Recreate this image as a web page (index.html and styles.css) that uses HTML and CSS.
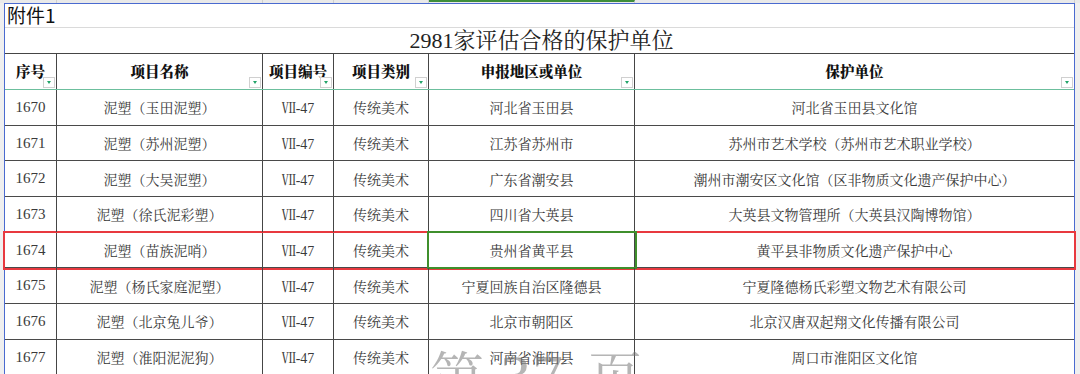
FILE: index.html
```html
<!DOCTYPE html>
<html lang="zh-CN">
<head>
<meta charset="utf-8">
<title>2981家评估合格的保护单位</title>
<link rel="stylesheet" href="styles.css">
</head>
<body>
<div class="page">
  <div class="top-strip">
    <span class="ts c1"></span><span class="ts c2"></span><span class="ts c3"></span><span class="ts c4"></span><span class="ts c5 active"></span><span class="ts c6"></span>
  </div>
  <div class="sheet">
    <div class="note">附件1</div>
    <div class="title">2981家评估合格的保护单位</div>
    <div class="row header">
      <div class="cell">序号<span class="filter"></span></div>
      <div class="cell">项目名称<span class="filter"></span></div>
      <div class="cell">项目编号<span class="filter"></span></div>
      <div class="cell">项目类别<span class="filter"></span></div>
      <div class="cell">申报地区或单位<span class="filter"></span></div>
      <div class="cell">保护单位<span class="filter"></span></div>
    </div>
    <div class="row data">
      <div class="cell">1670</div><div class="cell">泥塑（玉田泥塑）</div><div class="cell">Ⅶ-47</div><div class="cell">传统美术</div><div class="cell">河北省玉田县</div><div class="cell">河北省玉田县文化馆</div>
    </div>
    <div class="row data">
      <div class="cell">1671</div><div class="cell">泥塑（苏州泥塑）</div><div class="cell">Ⅶ-47</div><div class="cell">传统美术</div><div class="cell">江苏省苏州市</div><div class="cell">苏州市艺术学校（苏州市艺术职业学校）</div>
    </div>
    <div class="row data">
      <div class="cell">1672</div><div class="cell">泥塑（大吴泥塑）</div><div class="cell">Ⅶ-47</div><div class="cell">传统美术</div><div class="cell">广东省潮安县</div><div class="cell">潮州市潮安区文化馆（区非物质文化遗产保护中心）</div>
    </div>
    <div class="row data">
      <div class="cell">1673</div><div class="cell">泥塑（徐氏泥彩塑）</div><div class="cell">Ⅶ-47</div><div class="cell">传统美术</div><div class="cell">四川省大英县</div><div class="cell">大英县文物管理所（大英县汉陶博物馆）</div>
    </div>
    <div class="row data highlight">
      <div class="cell">1674</div><div class="cell">泥塑（苗族泥哨）</div><div class="cell">Ⅶ-47</div><div class="cell">传统美术</div><div class="cell selected">贵州省黄平县</div><div class="cell">黄平县非物质文化遗产保护中心</div>
    </div>
    <div class="row data">
      <div class="cell">1675</div><div class="cell">泥塑（杨氏家庭泥塑）</div><div class="cell">Ⅶ-47</div><div class="cell">传统美术</div><div class="cell">宁夏回族自治区隆德县</div><div class="cell">宁夏隆德杨氏彩塑文物艺术有限公司</div>
    </div>
    <div class="row data">
      <div class="cell">1676</div><div class="cell">泥塑（北京兔儿爷）</div><div class="cell">Ⅶ-47</div><div class="cell">传统美术</div><div class="cell">北京市朝阳区</div><div class="cell">北京汉唐双起翔文化传播有限公司</div>
    </div>
    <div class="row data">
      <div class="cell">1677</div><div class="cell">泥塑（淮阳泥泥狗）</div><div class="cell">Ⅶ-47</div><div class="cell">传统美术</div><div class="cell">河南省淮阳县</div><div class="cell">周口市淮阳区文化馆</div>
    </div>
  </div>
  <div class="watermark"><span class="wm-cjk">第</span><span class="wm-num">37</span><span class="wm-cjk">页</span></div>
</div>
</body>
</html>
```

FILE: styles.css
```css
* { box-sizing: border-box; }
html, body { margin: 0; padding: 0; }
body {
  background: #efefef;
  width: 1080px;
  height: 374px;
  overflow: hidden;
  font-family: "Liberation Serif", "Noto Serif CJK SC", "Noto Sans CJK SC", serif;
}
.page { position: relative; width: 1080px; height: 374px; overflow: hidden; }

.top-strip {
  display: grid;
  grid-template-columns: 57px 206px 71px 95px 206px 440px;
  height: 3px;
  background: #e9e9e9;
}
.ts { border-right: 1px solid #cfcfcf; }
.ts.active { border-top: 2px solid #3e8e3a; }

.sheet {
  margin-left: 4px;
  width: 1071px;
  background: #fff;
  border-top: 1px solid #4a6ad0;
  border-left: 1px solid #4a6ad0;
  border-right: 1px solid #4a6ad0;
}

.note {
  height: 24px;
  border-bottom: 1px solid #dadada;
  font-family: "Noto Sans CJK SC", sans-serif;
  font-size: 19px;
  line-height: 22px;
  color: #111;
  padding-left: 2px;
}
.title {
  height: 26px;
  border-bottom: 1px solid #454545;
  font-size: 22px;
  line-height: 25px;
  text-align: center;
  color: #222;
  padding-left: 4px;
}

.row {
  display: grid;
  grid-template-columns: 52px 206px 71px 95px 206px 439px;
}
.cell {
  position: relative;
  display: flex;
  align-items: center;
  justify-content: center;
  border-right: 1px solid #454545;
  white-space: nowrap;
}
.cell:last-child { border-right: 0; }

.header {
  height: 36px;
  border-bottom: 1px solid #6cbf9d;
  font-size: 14.5px;
  font-weight: 900;
  color: #111;
}
.header .cell { padding-bottom: 2px; }
.filter {
  position: absolute;
  right: 1px;
  bottom: 1px;
  width: 12px;
  height: 11px;
  background: #fff;
  border: 1px solid #d0d0d0;
}
.filter::after {
  content: "";
  position: absolute;
  left: 3px;
  top: 3px;
  border-left: 2.5px solid transparent;
  border-right: 2.5px solid transparent;
  border-top: 3px solid #23a46a;
}

.data {
  height: 35.7px;
  border-bottom: 1px solid #4a4a4a;
  font-size: 14px;
  color: #3a3a3a;
}
.data .cell:first-child { font-size: 15px; }

.highlight { outline: 2px solid #e8393f; outline-offset: 0; }
.selected { outline: 2px solid #3f8f2c; outline-offset: 0; }

.watermark {
  position: absolute;
  left: 430px;
  top: 346px;
  display: flex;
  align-items: baseline;
  font-size: 54px;
  line-height: 60px;
  color: rgba(120, 120, 120, 0.55);
  pointer-events: none;
}
.wm-num { font-size: 62px; margin: 0 24px 0 16px; letter-spacing: 1px; }
```
